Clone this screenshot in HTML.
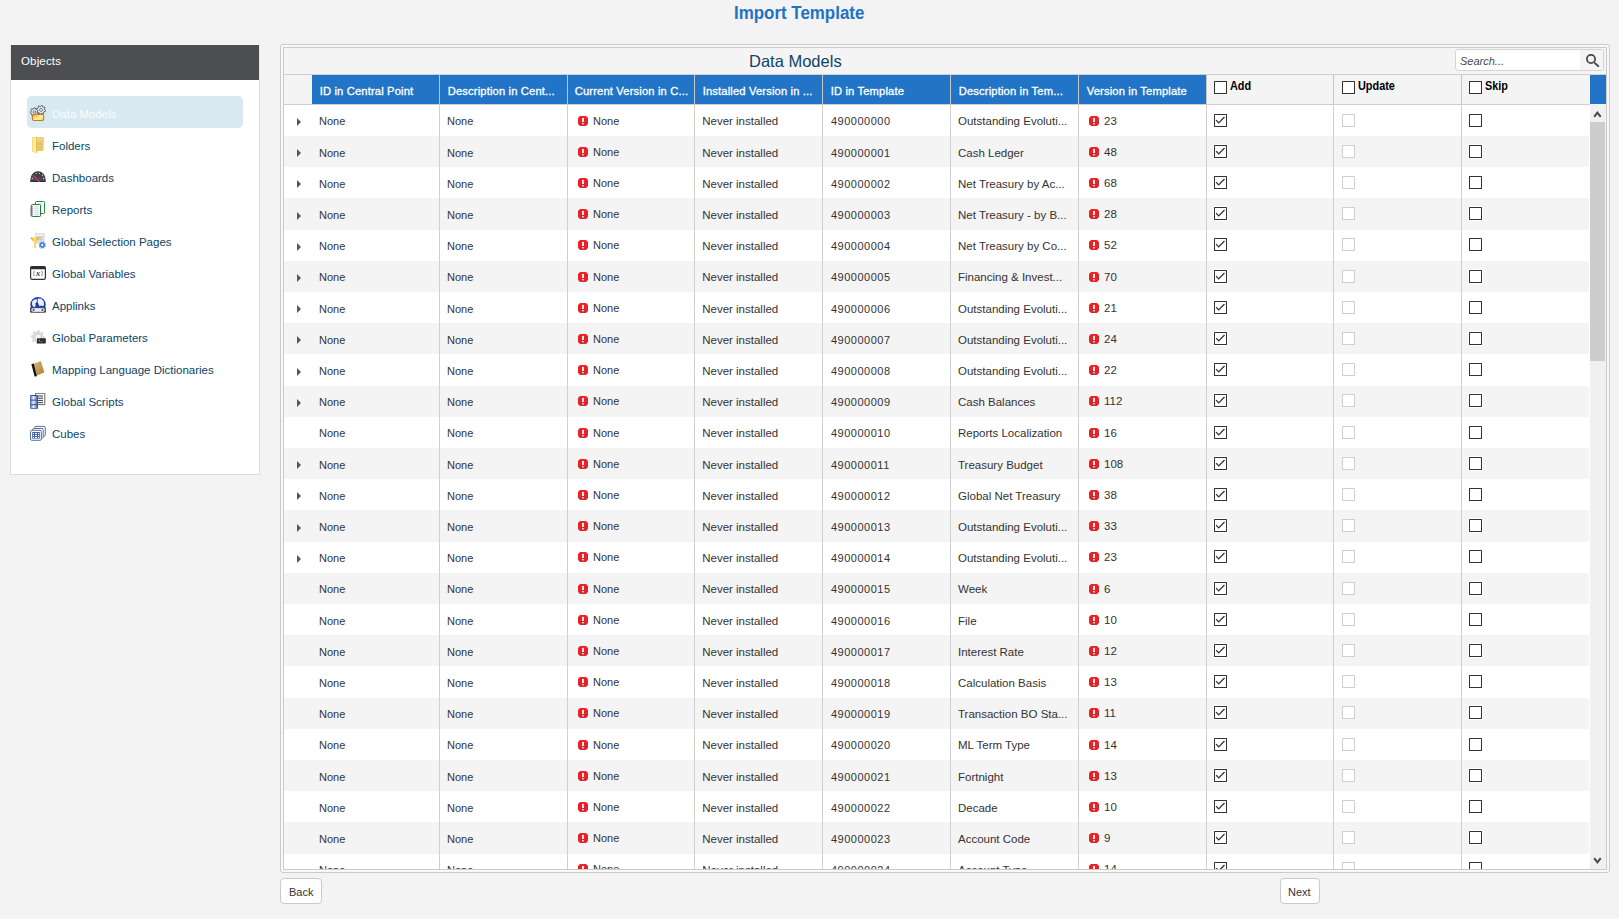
<!DOCTYPE html>
<html><head><meta charset="utf-8"><title>Import Template</title>
<style>
html,body{margin:0;padding:0;}
body{width:1619px;height:919px;overflow:hidden;background:#f3f3f3;position:relative;font-family:"Liberation Sans",sans-serif;color:#333;}
div{box-sizing:border-box;}
.a{position:absolute;}
.t{position:absolute;white-space:nowrap;}
.side-item{color:#0c4465;}
.hd{color:#fff;-webkit-text-stroke:0.3px #fff;letter-spacing:0.15px;}
.cb{position:absolute;width:13px;height:13px;border:1.3px solid #333;background:#fff;border-radius:0.5px;box-shadow:0 0 0 1px #fff;}
.cbd{position:absolute;width:13px;height:13px;border:1.3px solid #cfcfcf;background:#fff;border-radius:0.5px;}
.vl{position:absolute;width:1px;background:#d0d0d0;}
.err{position:absolute;width:10px;height:10px;}
.tri{position:absolute;width:0;height:0;border-top:4.5px solid transparent;border-bottom:4.5px solid transparent;border-left:4.5px solid #555;}
.btn{position:absolute;background:#fff;border:1px solid #c9c9c9;border-radius:4px;}
</style></head><body>
<div class="t" style="left:734px;top:2.46px;font-size:18px;line-height:22px;font-weight:bold;color:#1f72c4;transform:scaleX(0.94);transform-origin:0 0;">Import Template</div>
<div class="a" style="left:10px;top:44px;width:250px;height:431px;background:#fff;border:1px solid #dcdcdc;border-top-color:#f7f7f7;"></div>
<div class="a" style="left:10px;top:44px;width:250px;height:36px;background:#4d4e52;border:1px solid #e8e8e8;border-top-color:#f6f6f6;border-bottom:none;"></div>
<div class="t" style="left:21px;top:54.31px;font-size:11.5px;line-height:14px;color:#fff;letter-spacing:0.15px;">Objects</div>
<div class="a" style="left:27px;top:96px;width:216px;height:32px;background:#d8e9f2;border-radius:5px;"></div>
<div class="t side-item" style="left:52px;top:107.01px;font-size:11.5px;line-height:14px;color:#f9fcfe;">Data Models</div>
<div class="a icon0" style="left:30px;top:105px;width:16px;height:16px;"><svg width="16" height="16" viewBox="0 0 16 16"><defs><linearGradient id="g0" x1="0" y1="0" x2="1" y2="1"><stop offset="0" stop-color="#f0a030"/><stop offset=".6" stop-color="#fff3a0"/><stop offset="1" stop-color="#f0c040"/></linearGradient></defs><polygon points="8.61,7.85 8.32,8.77 6.95,8.93 6.46,9.45 6.36,10.83 5.46,11.17 4.48,10.20 3.76,10.14 2.63,10.92 1.80,10.43 1.95,9.06 1.55,8.46 0.23,8.06 0.10,7.10 1.26,6.36 1.48,5.68 0.97,4.40 1.64,3.70 2.94,4.15 3.61,3.90 4.30,2.70 5.25,2.79 5.72,4.08 6.33,4.45 7.70,4.24 8.23,5.04 7.50,6.21 7.60,6.92" fill="#dfe6ef" stroke="#44556e" stroke-width="0.9" stroke-linejoin="round"/><polygon points="15.58,5.36 15.40,6.24 14.00,6.51 13.62,7.06 13.91,8.46 13.16,8.96 11.98,8.16 11.33,8.28 10.54,9.48 9.66,9.30 9.39,7.90 8.84,7.52 7.44,7.81 6.94,7.06 7.74,5.88 7.62,5.23 6.42,4.44 6.60,3.56 8.00,3.29 8.38,2.74 8.09,1.34 8.84,0.84 10.02,1.64 10.67,1.52 11.46,0.32 12.34,0.50 12.61,1.90 13.16,2.28 14.56,1.99 15.06,2.74 14.26,3.92 14.38,4.57" fill="#e9eef5" stroke="#44556e" stroke-width="0.9" stroke-linejoin="round"/><circle cx="4.4" cy="7" r="1.3" fill="none" stroke="#6b7a90" stroke-width=".9"/><circle cx="11" cy="4.9" r="1.5" fill="none" stroke="#6b7a90" stroke-width=".9"/><rect x="2.3" y="9.3" width="11.4" height="6.3" rx="1.6" fill="url(#g0)" stroke="#c06e12" stroke-width="1"/></svg></div>
<div class="t side-item" style="left:52px;top:139.01px;font-size:11.5px;line-height:14px;">Folders</div>
<div class="a icon1" style="left:30px;top:137px;width:16px;height:16px;"><svg width="16" height="16" viewBox="0 0 16 16"><path d="M2.2 0.2H14V4.7H13V13.7H6.5V15.8L2.2 14.5Z" fill="#e5bf55"/><rect x="6.5" y="0.8" width="7" height="12.5" fill="#e9c665"/><rect x="6.5" y="0.5" width="7.5" height="4" fill="#efd57c"/><path d="M2.2 0.4H6.7V15.9L2.4 14.6Z" fill="#f6e68a"/><rect x="4.2" y="0.6" width="1.6" height="15" fill="#fbf2a0"/><rect x="6.3" y="0.6" width=".6" height="15.2" fill="#d4ac3c"/></svg></div>
<div class="t side-item" style="left:52px;top:171.01px;font-size:11.5px;line-height:14px;">Dashboards</div>
<div class="a icon2" style="left:30px;top:169px;width:16px;height:16px;"><svg width="16" height="16" viewBox="0 0 16 16"><defs><linearGradient id="g2" x1="0" y1="0" x2="0" y2="1"><stop offset="0" stop-color="#36363a"/><stop offset="1" stop-color="#4e4e66"/></linearGradient></defs><path d="M0.3 12.7V10.5A7.7 8.3 0 0 1 15.7 10.5V12.7Z" fill="url(#g2)"/><rect x="0.3" y="11.8" width="15.4" height="1" fill="#1f1f22"/><g fill="#c8c8c8"><circle cx="6.4" cy="4.4" r=".7"/><circle cx="9.4" cy="4.4" r=".7"/><circle cx="12.4" cy="6.3" r=".7"/><circle cx="2.4" cy="9.5" r=".7"/><circle cx="13.5" cy="9.5" r=".7"/></g><line x1="3" y1="6.1" x2="9.6" y2="12.9" stroke="#e83a3a" stroke-width="1.3"/></svg></div>
<div class="t side-item" style="left:52px;top:203.01px;font-size:11.5px;line-height:14px;">Reports</div>
<div class="a icon3" style="left:30px;top:201px;width:16px;height:16px;"><svg width="16" height="16" viewBox="0 0 16 16"><rect x="5.5" y="0.5" width="9" height="12" rx=".8" fill="#fbfdfb" stroke="#2f8c3c" stroke-width="1"/><g fill="#c5cdf0"><rect x="8" y="2.5" width="4.5" height=".7"/><rect x="10.5" y="4.5" width="2" height=".7"/><rect x="10.5" y="6.5" width="2" height=".7"/><rect x="10.5" y="8.5" width="2" height=".7"/><rect x="10.5" y="10.5" width="2" height=".7"/></g><rect x="1.5" y="3.5" width="9" height="12" rx=".8" fill="#f4faf6" stroke="#2a7a34" stroke-width="1"/><g fill="#c5cdf0"><rect x="4.2" y="5.5" width="4.5" height=".8"/><rect x="4.2" y="7.5" width="4.5" height=".8"/><rect x="4.2" y="9.5" width="4.5" height=".8"/><rect x="4.2" y="11.5" width="4.5" height=".8"/><rect x="4.2" y="13.5" width="4.5" height=".8"/></g><g fill="#888"><rect x="0" y="5.2" width="3" height="1.2"/><rect x="0" y="7.2" width="3" height="1.2"/><rect x="0" y="9.2" width="3" height="1.2"/><rect x="0" y="11.2" width="3" height="1.2"/><rect x="0" y="13.2" width="3" height="1.2"/></g></svg></div>
<div class="t side-item" style="left:52px;top:235.01px;font-size:11.5px;line-height:14px;">Global Selection Pages</div>
<div class="a icon4" style="left:30px;top:233px;width:16px;height:16px;"><svg width="16" height="16" viewBox="0 0 16 16"><rect x="5" y="0" width="9.8" height="10.6" fill="#dedede"/><rect x="6" y="1.2" width="7.5" height="1.6" fill="#f2f2f2"/><rect x="6.5" y="4" width="6" height="1" fill="#bdbdbd"/><rect x="6.5" y="6" width="6" height="1" fill="#c4c4c4"/><defs><linearGradient id="g4" x1="0" y1="0" x2="1" y2="0"><stop offset="0" stop-color="#e8900a"/><stop offset=".5" stop-color="#ffe070"/><stop offset="1" stop-color="#e8980f"/></linearGradient></defs><path d="M0 4.4H9.4L6 9.5V15.8L4 14.5V9.5Z" fill="url(#g4)"/><polygon points="15.93,12.84 15.71,13.53 14.54,13.61 14.20,14.02 14.34,15.18 13.70,15.52 12.82,14.75 12.29,14.80 11.56,15.73 10.87,15.51 10.79,14.34 10.38,14.00 9.22,14.14 8.88,13.50 9.65,12.62 9.60,12.09 8.67,11.36 8.89,10.67 10.06,10.59 10.40,10.18 10.26,9.02 10.90,8.68 11.78,9.45 12.31,9.40 13.04,8.47 13.73,8.69 13.81,9.86 14.22,10.20 15.38,10.06 15.72,10.70 14.95,11.58 15.00,12.11" fill="#4d86cc" stroke-linejoin="round"/><circle cx="12.3" cy="12.1" r="1.1" fill="#eef5fc"/></svg></div>
<div class="t side-item" style="left:52px;top:267.01px;font-size:11.5px;line-height:14px;">Global Variables</div>
<div class="a icon5" style="left:30px;top:265px;width:16px;height:16px;"><svg width="16" height="16" viewBox="0 0 16 16"><rect x="0.6" y="1.6" width="14.8" height="12.8" rx="1.6" fill="#fff" stroke="#333" stroke-width="1.2"/><rect x="0.6" y="1.6" width="14.8" height="2.6" rx="1" fill="#2b2b2b"/><path d="M4.3 5.8Q2.9 8.4 4.3 11" fill="none" stroke="#888" stroke-width="1"/><path d="M11.7 5.8Q13.1 8.4 11.7 11" fill="none" stroke="#888" stroke-width="1"/><text x="8" y="10.8" font-family="Liberation Serif" font-style="italic" font-weight="bold" font-size="8.5" text-anchor="middle" fill="#3a3a3a">x</text></svg></div>
<div class="t side-item" style="left:52px;top:299.01px;font-size:11.5px;line-height:14px;">Applinks</div>
<div class="a icon6" style="left:30px;top:297px;width:16px;height:16px;"><svg width="16" height="16" viewBox="0 0 16 16"><circle cx="8" cy="7.8" r="7.7" fill="#1340b8"/><path d="M2.2 4.2L4.8 2.2L7 2.6L6.8 5.2L5.4 6L5.6 9.4L3.4 10L2 7.4Z" fill="#e8eef9"/><path d="M7.8 1.6L11.4 1.8L13.6 4.2L14 7.8L12.8 9.6L11.2 8.2L9.8 9.4L8.6 7.6L7.6 4.8Z" fill="#eef2fa"/><rect x="0" y="10.2" width="16" height="5.6" rx="1.2" fill="#4a4a4a"/><rect x="1.3" y="11.3" width="13.4" height="3.4" rx="1.7" fill="#fff"/><rect x="5.5" y="12.4" width="5" height="1.2" fill="#ddd"/><circle cx="3.6" cy="13" r="1.1" fill="#1a3fc0"/><circle cx="12.4" cy="13" r="1.1" fill="#1a3fc0"/></svg></div>
<div class="t side-item" style="left:52px;top:331.01px;font-size:11.5px;line-height:14px;">Global Parameters</div>
<div class="a icon7" style="left:30px;top:329px;width:16px;height:16px;"><svg width="16" height="16" viewBox="0 0 16 16"><polygon points="15.00,8.00 14.86,9.40 12.79,10.07 12.29,11.00 12.89,13.09 11.80,13.99 9.87,12.99 8.85,13.30 7.80,15.20 6.40,15.06 5.73,12.99 4.80,12.49 2.71,13.09 1.81,12.00 2.81,10.07 2.50,9.05 0.60,8.00 0.74,6.60 2.81,5.93 3.31,5.00 2.71,2.91 3.80,2.01 5.73,3.01 6.75,2.70 7.80,0.80 9.20,0.94 9.87,3.01 10.80,3.51 12.89,2.91 13.79,4.00 12.79,5.93 13.10,6.95" fill="#dadada" stroke-linejoin="round"/><circle cx="8" cy="8" r="2.2" fill="#f7f7f7"/><rect x="7" y="9.3" width="8.8" height="5.2" rx=".6" fill="#2c2c2c"/><path d="M8.8 10.5L10 11.5L8.8 12.5" stroke="#ddd" stroke-width=".6" fill="none"/><rect x="10.5" y="12.3" width="2" height=".6" fill="#aaa"/></svg></div>
<div class="t side-item" style="left:52px;top:363.01px;font-size:11.5px;line-height:14px;">Mapping Language Dictionaries</div>
<div class="a icon8" style="left:30px;top:361px;width:16px;height:16px;"><svg width="16" height="16" viewBox="0 0 16 16"><defs><linearGradient id="g8" x1="0" y1="0" x2="1" y2="1"><stop offset="0" stop-color="#dcb777"/><stop offset="1" stop-color="#a88038"/></linearGradient></defs><path d="M3.5 2.8L10.9 0L14.4 11.3L6.2 15Z" fill="url(#g8)"/><path d="M1.4 3.3L3.8 2.6L6.8 15.2L4.6 15.6Z" fill="#111"/></svg></div>
<div class="t side-item" style="left:52px;top:395.01px;font-size:11.5px;line-height:14px;">Global Scripts</div>
<div class="a icon9" style="left:30px;top:393px;width:16px;height:16px;"><svg width="16" height="16" viewBox="0 0 16 16"><path d="M5.5 0.3H14.8V10.5Q15.8 11.5 14.8 11.6H5.5Z" fill="#fff" stroke="#555" stroke-width=".9"/><g fill="#3a3a3a"><rect x="7.5" y="2.5" width="5.5" height="1"/><rect x="7.5" y="4.7" width="5.5" height="1"/><rect x="7.5" y="6.9" width="5.5" height="1"/><rect x="7.5" y="9.1" width="5.5" height="1"/></g><rect x="0.2" y="2" width="7.8" height="13.8" rx=".6" fill="#2f4f9e"/><defs><linearGradient id="g9" x1="0" y1="0" x2="1" y2="0"><stop offset="0" stop-color="#6e8fd2"/><stop offset=".4" stop-color="#e8efff"/><stop offset="1" stop-color="#4a6cb8"/></linearGradient></defs><rect x="1" y="3" width="6.2" height="3.6" fill="url(#g9)"/><rect x="1" y="7.6" width="6.2" height="3.6" fill="url(#g9)"/><rect x="1" y="12.2" width="6.2" height="2.8" fill="url(#g9)"/></svg></div>
<div class="t side-item" style="left:52px;top:427.01px;font-size:11.5px;line-height:14px;">Cubes</div>
<div class="a icon10" style="left:30px;top:425px;width:16px;height:16px;"><svg width="16" height="16" viewBox="0 0 16 16"><rect x="4.7" y="1.4" width="10.6" height="9.7" rx="1.3" fill="#fff" stroke="#5670a0" stroke-width="1"/><rect x="2.6" y="3.5" width="10.6" height="9.7" rx="1.3" fill="#fff" stroke="#5670a0" stroke-width="1"/><rect x="0.5" y="5.3" width="10.8" height="10" rx="1.3" fill="#fff" stroke="#5670a0" stroke-width="1"/><rect x="2.2" y="7" width="7.6" height="6.6" fill="#3f62ab"/><g fill="#fff"><rect x="3" y="8" width="1" height="1"/><rect x="5" y="8" width="2" height="1"/><rect x="8" y="8" width="1" height="1"/><rect x="3" y="10" width="1" height="1"/><rect x="5" y="10" width="2" height="1"/><rect x="8" y="10" width="1" height="1"/><rect x="3" y="12" width="1" height="1"/><rect x="5" y="12" width="2" height="1"/><rect x="8" y="12" width="1" height="1"/></g></svg></div>
<div class="a" style="left:280px;top:44px;width:1330px;height:829px;border:1px solid #cbcbcb;border-radius:3px;background:#f8f8f8;"></div>
<div class="a" style="left:283px;top:47px;width:1324px;height:823px;border:1px solid #cbcbcb;background:#f4f4f4;"></div>
<div class="t" style="left:749px;top:51.28px;font-size:16.5px;line-height:20px;color:#0e4468;">Data Models</div>
<div class="a" style="left:1455px;top:49px;width:149px;height:22px;border:1px solid #d3d3d3;border-radius:3px;background:#fff;overflow:hidden;"><div class="a" style="left:124px;top:0;width:23px;height:20px;background:#f4f4f4;"></div></div>
<div class="t" style="left:1460px;top:54.69px;font-size:11px;line-height:13px;font-style:italic;color:#484848;">Search...</div>
<svg class="a" style="left:1584px;top:52px;" width="18" height="16" viewBox="0 0 18 16"><circle cx="7" cy="7" r="4.1" fill="none" stroke="#444" stroke-width="1.7"/><line x1="11" y1="11.2" x2="14.3" y2="14.1" stroke="#444" stroke-width="1.9" stroke-linecap="round"/></svg>
<div class="a" style="left:284px;top:74px;width:1322px;height:1px;background:#cfcfcf;"></div>
<div class="a" style="left:284px;top:75px;width:28px;height:29px;background:#f4f4f4;"></div>
<div class="a" style="left:312px;top:75px;width:894px;height:29px;background:#2275c6;"></div>
<div class="a" style="left:1206px;top:75px;width:384px;height:29px;background:#f4f4f4;"></div>
<div class="a" style="left:1590px;top:75px;width:16px;height:29px;background:#2275c6;"></div>
<div class="a" style="left:284px;top:104px;width:1306px;height:1px;background:#cfcfcf;"></div>
<div class="vl" style="left:439px;top:75px;height:29px;background:#c6c6c6;"></div>
<div class="vl" style="left:567px;top:75px;height:29px;background:#c6c6c6;"></div>
<div class="vl" style="left:694px;top:75px;height:29px;background:#c6c6c6;"></div>
<div class="vl" style="left:822px;top:75px;height:29px;background:#c6c6c6;"></div>
<div class="vl" style="left:950px;top:75px;height:29px;background:#c6c6c6;"></div>
<div class="vl" style="left:1078px;top:75px;height:29px;background:#c6c6c6;"></div>
<div class="vl" style="left:1206px;top:75px;height:29px;background:#c6c6c6;"></div>
<div class="vl" style="left:1333px;top:75px;height:29px;background:#c6c6c6;"></div>
<div class="vl" style="left:1461px;top:75px;height:29px;background:#c6c6c6;"></div>
<div class="t hd" style="left:319.7px;top:84.62px;font-size:11.2px;line-height:13px;">ID in Central Point</div>
<div class="t hd" style="left:447.7px;top:84.62px;font-size:11.2px;line-height:13px;">Description in Cent...</div>
<div class="t hd" style="left:574.7px;top:84.62px;font-size:11.2px;line-height:13px;">Current Version in C...</div>
<div class="t hd" style="left:702.7px;top:84.62px;font-size:11.2px;line-height:13px;">Installed Version in ...</div>
<div class="t hd" style="left:830.7px;top:84.62px;font-size:11.2px;line-height:13px;">ID in Template</div>
<div class="t hd" style="left:958.7px;top:84.62px;font-size:11.2px;line-height:13px;">Description in Tem...</div>
<div class="t hd" style="left:1086.7px;top:84.62px;font-size:11.2px;line-height:13px;">Version in Template</div>
<div class="cb" style="left:1214px;top:81px;box-shadow:none;"></div>
<div class="t" style="left:1230px;top:78.77px;font-size:12.5px;line-height:15px;font-weight:bold;color:#000;transform:scaleX(0.87);transform-origin:0 0;">Add</div>
<div class="cb" style="left:1342px;top:81px;box-shadow:none;"></div>
<div class="t" style="left:1358px;top:78.77px;font-size:12.5px;line-height:15px;font-weight:bold;color:#000;transform:scaleX(0.87);transform-origin:0 0;">Update</div>
<div class="cb" style="left:1469px;top:81px;box-shadow:none;"></div>
<div class="t" style="left:1485px;top:78.77px;font-size:12.5px;line-height:15px;font-weight:bold;color:#000;transform:scaleX(0.87);transform-origin:0 0;">Skip</div>
<div class="a" style="left:284px;top:105px;width:1306px;height:764px;overflow:hidden;background:#fff;">
<div class="tri" style="left:13px;top:13px;"></div>
<div class="t" style="left:35px;top:9.99px;font-size:11px;line-height:13px;">None</div>
<div class="t" style="left:163px;top:9.99px;font-size:11px;line-height:13px;">None</div>
<svg class="err" style="left:294px;top:11px;" viewBox="0 0 10 10"><path d="M2 0H8L10 2V8L8 10H2L0 8V2Z" fill="url(#eg)"/><rect x="4.1" y="1.9" width="1.8" height="4.1" fill="#fff"/><rect x="4.1" y="7.2" width="1.8" height="1.1" fill="#fff"/></svg><div class="t" style="left:309px;top:9.99px;font-size:11px;line-height:13px;">None</div>
<div class="t" style="left:418.20000000000005px;top:9.31px;font-size:11.5px;line-height:14px;">Never installed</div>
<div class="t" style="left:547px;top:9.99px;font-size:11px;line-height:13px;letter-spacing:0.5px;">490000000</div>
<div class="t" style="left:674px;top:9.31px;font-size:11.5px;line-height:14px;">Outstanding Evoluti...</div>
<svg class="err" style="left:805px;top:11px;" viewBox="0 0 10 10"><path d="M2 0H8L10 2V8L8 10H2L0 8V2Z" fill="url(#eg)"/><rect x="4.1" y="1.9" width="1.8" height="4.1" fill="#fff"/><rect x="4.1" y="7.2" width="1.8" height="1.1" fill="#fff"/></svg><div class="t" style="left:820px;top:9.31px;font-size:11.5px;line-height:14px;">23</div>
<div class="cb" style="left:930px;top:9px;"><svg width="11" height="11" viewBox="0 0 11 11" style="position:absolute;left:0;top:0"><path d="M1.1 5.1L3.7 7.9L9.5 2.1" fill="none" stroke="#333" stroke-width="1.35"/></svg></div>
<div class="cbd" style="left:1058px;top:9px;"></div>
<div class="cb" style="left:1185px;top:9px;"></div>
<div class="a" style="left:0;top:31px;width:1305px;height:31px;background:#f4f4f4;"></div>
<div class="tri" style="left:13px;top:44px;"></div>
<div class="t" style="left:35px;top:41.99px;font-size:11px;line-height:13px;">None</div>
<div class="t" style="left:163px;top:41.99px;font-size:11px;line-height:13px;">None</div>
<svg class="err" style="left:294px;top:42px;" viewBox="0 0 10 10"><path d="M2 0H8L10 2V8L8 10H2L0 8V2Z" fill="url(#eg)"/><rect x="4.1" y="1.9" width="1.8" height="4.1" fill="#fff"/><rect x="4.1" y="7.2" width="1.8" height="1.1" fill="#fff"/></svg><div class="t" style="left:309px;top:40.99px;font-size:11px;line-height:13px;">None</div>
<div class="t" style="left:418.20000000000005px;top:41.31px;font-size:11.5px;line-height:14px;">Never installed</div>
<div class="t" style="left:547px;top:41.99px;font-size:11px;line-height:13px;letter-spacing:0.5px;">490000001</div>
<div class="t" style="left:674px;top:41.31px;font-size:11.5px;line-height:14px;">Cash Ledger</div>
<svg class="err" style="left:805px;top:42px;" viewBox="0 0 10 10"><path d="M2 0H8L10 2V8L8 10H2L0 8V2Z" fill="url(#eg)"/><rect x="4.1" y="1.9" width="1.8" height="4.1" fill="#fff"/><rect x="4.1" y="7.2" width="1.8" height="1.1" fill="#fff"/></svg><div class="t" style="left:820px;top:40.31px;font-size:11.5px;line-height:14px;">48</div>
<div class="cb" style="left:930px;top:40px;"><svg width="11" height="11" viewBox="0 0 11 11" style="position:absolute;left:0;top:0"><path d="M1.1 5.1L3.7 7.9L9.5 2.1" fill="none" stroke="#333" stroke-width="1.35"/></svg></div>
<div class="cbd" style="left:1058px;top:40px;"></div>
<div class="cb" style="left:1185px;top:40px;"></div>
<div class="tri" style="left:13px;top:75px;"></div>
<div class="t" style="left:35px;top:72.99px;font-size:11px;line-height:13px;">None</div>
<div class="t" style="left:163px;top:72.99px;font-size:11px;line-height:13px;">None</div>
<svg class="err" style="left:294px;top:73px;" viewBox="0 0 10 10"><path d="M2 0H8L10 2V8L8 10H2L0 8V2Z" fill="url(#eg)"/><rect x="4.1" y="1.9" width="1.8" height="4.1" fill="#fff"/><rect x="4.1" y="7.2" width="1.8" height="1.1" fill="#fff"/></svg><div class="t" style="left:309px;top:71.99px;font-size:11px;line-height:13px;">None</div>
<div class="t" style="left:418.20000000000005px;top:72.31px;font-size:11.5px;line-height:14px;">Never installed</div>
<div class="t" style="left:547px;top:72.99px;font-size:11px;line-height:13px;letter-spacing:0.5px;">490000002</div>
<div class="t" style="left:674px;top:72.31px;font-size:11.5px;line-height:14px;">Net Treasury by Ac...</div>
<svg class="err" style="left:805px;top:73px;" viewBox="0 0 10 10"><path d="M2 0H8L10 2V8L8 10H2L0 8V2Z" fill="url(#eg)"/><rect x="4.1" y="1.9" width="1.8" height="4.1" fill="#fff"/><rect x="4.1" y="7.2" width="1.8" height="1.1" fill="#fff"/></svg><div class="t" style="left:820px;top:71.31px;font-size:11.5px;line-height:14px;">68</div>
<div class="cb" style="left:930px;top:71px;"><svg width="11" height="11" viewBox="0 0 11 11" style="position:absolute;left:0;top:0"><path d="M1.1 5.1L3.7 7.9L9.5 2.1" fill="none" stroke="#333" stroke-width="1.35"/></svg></div>
<div class="cbd" style="left:1058px;top:71px;"></div>
<div class="cb" style="left:1185px;top:71px;"></div>
<div class="a" style="left:0;top:93px;width:1305px;height:32px;background:#f4f4f4;"></div>
<div class="tri" style="left:13px;top:107px;"></div>
<div class="t" style="left:35px;top:103.99px;font-size:11px;line-height:13px;">None</div>
<div class="t" style="left:163px;top:103.99px;font-size:11px;line-height:13px;">None</div>
<svg class="err" style="left:294px;top:104px;" viewBox="0 0 10 10"><path d="M2 0H8L10 2V8L8 10H2L0 8V2Z" fill="url(#eg)"/><rect x="4.1" y="1.9" width="1.8" height="4.1" fill="#fff"/><rect x="4.1" y="7.2" width="1.8" height="1.1" fill="#fff"/></svg><div class="t" style="left:309px;top:102.99px;font-size:11px;line-height:13px;">None</div>
<div class="t" style="left:418.20000000000005px;top:103.31px;font-size:11.5px;line-height:14px;">Never installed</div>
<div class="t" style="left:547px;top:103.99px;font-size:11px;line-height:13px;letter-spacing:0.5px;">490000003</div>
<div class="t" style="left:674px;top:103.31px;font-size:11.5px;line-height:14px;">Net Treasury - by B...</div>
<svg class="err" style="left:805px;top:104px;" viewBox="0 0 10 10"><path d="M2 0H8L10 2V8L8 10H2L0 8V2Z" fill="url(#eg)"/><rect x="4.1" y="1.9" width="1.8" height="4.1" fill="#fff"/><rect x="4.1" y="7.2" width="1.8" height="1.1" fill="#fff"/></svg><div class="t" style="left:820px;top:102.31px;font-size:11.5px;line-height:14px;">28</div>
<div class="cb" style="left:930px;top:102px;"><svg width="11" height="11" viewBox="0 0 11 11" style="position:absolute;left:0;top:0"><path d="M1.1 5.1L3.7 7.9L9.5 2.1" fill="none" stroke="#333" stroke-width="1.35"/></svg></div>
<div class="cbd" style="left:1058px;top:102px;"></div>
<div class="cb" style="left:1185px;top:102px;"></div>
<div class="tri" style="left:13px;top:138px;"></div>
<div class="t" style="left:35px;top:134.99px;font-size:11px;line-height:13px;">None</div>
<div class="t" style="left:163px;top:134.99px;font-size:11px;line-height:13px;">None</div>
<svg class="err" style="left:294px;top:135px;" viewBox="0 0 10 10"><path d="M2 0H8L10 2V8L8 10H2L0 8V2Z" fill="url(#eg)"/><rect x="4.1" y="1.9" width="1.8" height="4.1" fill="#fff"/><rect x="4.1" y="7.2" width="1.8" height="1.1" fill="#fff"/></svg><div class="t" style="left:309px;top:133.99px;font-size:11px;line-height:13px;">None</div>
<div class="t" style="left:418.20000000000005px;top:134.31px;font-size:11.5px;line-height:14px;">Never installed</div>
<div class="t" style="left:547px;top:134.99px;font-size:11px;line-height:13px;letter-spacing:0.5px;">490000004</div>
<div class="t" style="left:674px;top:134.31px;font-size:11.5px;line-height:14px;">Net Treasury by Co...</div>
<svg class="err" style="left:805px;top:135px;" viewBox="0 0 10 10"><path d="M2 0H8L10 2V8L8 10H2L0 8V2Z" fill="url(#eg)"/><rect x="4.1" y="1.9" width="1.8" height="4.1" fill="#fff"/><rect x="4.1" y="7.2" width="1.8" height="1.1" fill="#fff"/></svg><div class="t" style="left:820px;top:133.31px;font-size:11.5px;line-height:14px;">52</div>
<div class="cb" style="left:930px;top:133px;"><svg width="11" height="11" viewBox="0 0 11 11" style="position:absolute;left:0;top:0"><path d="M1.1 5.1L3.7 7.9L9.5 2.1" fill="none" stroke="#333" stroke-width="1.35"/></svg></div>
<div class="cbd" style="left:1058px;top:133px;"></div>
<div class="cb" style="left:1185px;top:133px;"></div>
<div class="a" style="left:0;top:156px;width:1305px;height:31px;background:#f4f4f4;"></div>
<div class="tri" style="left:13px;top:169px;"></div>
<div class="t" style="left:35px;top:165.99px;font-size:11px;line-height:13px;">None</div>
<div class="t" style="left:163px;top:165.99px;font-size:11px;line-height:13px;">None</div>
<svg class="err" style="left:294px;top:167px;" viewBox="0 0 10 10"><path d="M2 0H8L10 2V8L8 10H2L0 8V2Z" fill="url(#eg)"/><rect x="4.1" y="1.9" width="1.8" height="4.1" fill="#fff"/><rect x="4.1" y="7.2" width="1.8" height="1.1" fill="#fff"/></svg><div class="t" style="left:309px;top:165.99px;font-size:11px;line-height:13px;">None</div>
<div class="t" style="left:418.20000000000005px;top:165.31px;font-size:11.5px;line-height:14px;">Never installed</div>
<div class="t" style="left:547px;top:165.99px;font-size:11px;line-height:13px;letter-spacing:0.5px;">490000005</div>
<div class="t" style="left:674px;top:165.31px;font-size:11.5px;line-height:14px;">Financing &amp; Invest...</div>
<svg class="err" style="left:805px;top:167px;" viewBox="0 0 10 10"><path d="M2 0H8L10 2V8L8 10H2L0 8V2Z" fill="url(#eg)"/><rect x="4.1" y="1.9" width="1.8" height="4.1" fill="#fff"/><rect x="4.1" y="7.2" width="1.8" height="1.1" fill="#fff"/></svg><div class="t" style="left:820px;top:165.31px;font-size:11.5px;line-height:14px;">70</div>
<div class="cb" style="left:930px;top:165px;"><svg width="11" height="11" viewBox="0 0 11 11" style="position:absolute;left:0;top:0"><path d="M1.1 5.1L3.7 7.9L9.5 2.1" fill="none" stroke="#333" stroke-width="1.35"/></svg></div>
<div class="cbd" style="left:1058px;top:165px;"></div>
<div class="cb" style="left:1185px;top:165px;"></div>
<div class="tri" style="left:13px;top:200px;"></div>
<div class="t" style="left:35px;top:197.99px;font-size:11px;line-height:13px;">None</div>
<div class="t" style="left:163px;top:197.99px;font-size:11px;line-height:13px;">None</div>
<svg class="err" style="left:294px;top:198px;" viewBox="0 0 10 10"><path d="M2 0H8L10 2V8L8 10H2L0 8V2Z" fill="url(#eg)"/><rect x="4.1" y="1.9" width="1.8" height="4.1" fill="#fff"/><rect x="4.1" y="7.2" width="1.8" height="1.1" fill="#fff"/></svg><div class="t" style="left:309px;top:196.99px;font-size:11px;line-height:13px;">None</div>
<div class="t" style="left:418.20000000000005px;top:197.31px;font-size:11.5px;line-height:14px;">Never installed</div>
<div class="t" style="left:547px;top:197.99px;font-size:11px;line-height:13px;letter-spacing:0.5px;">490000006</div>
<div class="t" style="left:674px;top:197.31px;font-size:11.5px;line-height:14px;">Outstanding Evoluti...</div>
<svg class="err" style="left:805px;top:198px;" viewBox="0 0 10 10"><path d="M2 0H8L10 2V8L8 10H2L0 8V2Z" fill="url(#eg)"/><rect x="4.1" y="1.9" width="1.8" height="4.1" fill="#fff"/><rect x="4.1" y="7.2" width="1.8" height="1.1" fill="#fff"/></svg><div class="t" style="left:820px;top:196.31px;font-size:11.5px;line-height:14px;">21</div>
<div class="cb" style="left:930px;top:196px;"><svg width="11" height="11" viewBox="0 0 11 11" style="position:absolute;left:0;top:0"><path d="M1.1 5.1L3.7 7.9L9.5 2.1" fill="none" stroke="#333" stroke-width="1.35"/></svg></div>
<div class="cbd" style="left:1058px;top:196px;"></div>
<div class="cb" style="left:1185px;top:196px;"></div>
<div class="a" style="left:0;top:218px;width:1305px;height:31px;background:#f4f4f4;"></div>
<div class="tri" style="left:13px;top:231px;"></div>
<div class="t" style="left:35px;top:228.99px;font-size:11px;line-height:13px;">None</div>
<div class="t" style="left:163px;top:228.99px;font-size:11px;line-height:13px;">None</div>
<svg class="err" style="left:294px;top:229px;" viewBox="0 0 10 10"><path d="M2 0H8L10 2V8L8 10H2L0 8V2Z" fill="url(#eg)"/><rect x="4.1" y="1.9" width="1.8" height="4.1" fill="#fff"/><rect x="4.1" y="7.2" width="1.8" height="1.1" fill="#fff"/></svg><div class="t" style="left:309px;top:227.99px;font-size:11px;line-height:13px;">None</div>
<div class="t" style="left:418.20000000000005px;top:228.31px;font-size:11.5px;line-height:14px;">Never installed</div>
<div class="t" style="left:547px;top:228.99px;font-size:11px;line-height:13px;letter-spacing:0.5px;">490000007</div>
<div class="t" style="left:674px;top:228.31px;font-size:11.5px;line-height:14px;">Outstanding Evoluti...</div>
<svg class="err" style="left:805px;top:229px;" viewBox="0 0 10 10"><path d="M2 0H8L10 2V8L8 10H2L0 8V2Z" fill="url(#eg)"/><rect x="4.1" y="1.9" width="1.8" height="4.1" fill="#fff"/><rect x="4.1" y="7.2" width="1.8" height="1.1" fill="#fff"/></svg><div class="t" style="left:820px;top:227.31px;font-size:11.5px;line-height:14px;">24</div>
<div class="cb" style="left:930px;top:227px;"><svg width="11" height="11" viewBox="0 0 11 11" style="position:absolute;left:0;top:0"><path d="M1.1 5.1L3.7 7.9L9.5 2.1" fill="none" stroke="#333" stroke-width="1.35"/></svg></div>
<div class="cbd" style="left:1058px;top:227px;"></div>
<div class="cb" style="left:1185px;top:227px;"></div>
<div class="tri" style="left:13px;top:263px;"></div>
<div class="t" style="left:35px;top:259.99px;font-size:11px;line-height:13px;">None</div>
<div class="t" style="left:163px;top:259.99px;font-size:11px;line-height:13px;">None</div>
<svg class="err" style="left:294px;top:260px;" viewBox="0 0 10 10"><path d="M2 0H8L10 2V8L8 10H2L0 8V2Z" fill="url(#eg)"/><rect x="4.1" y="1.9" width="1.8" height="4.1" fill="#fff"/><rect x="4.1" y="7.2" width="1.8" height="1.1" fill="#fff"/></svg><div class="t" style="left:309px;top:258.99px;font-size:11px;line-height:13px;">None</div>
<div class="t" style="left:418.20000000000005px;top:259.31px;font-size:11.5px;line-height:14px;">Never installed</div>
<div class="t" style="left:547px;top:259.99px;font-size:11px;line-height:13px;letter-spacing:0.5px;">490000008</div>
<div class="t" style="left:674px;top:259.31px;font-size:11.5px;line-height:14px;">Outstanding Evoluti...</div>
<svg class="err" style="left:805px;top:260px;" viewBox="0 0 10 10"><path d="M2 0H8L10 2V8L8 10H2L0 8V2Z" fill="url(#eg)"/><rect x="4.1" y="1.9" width="1.8" height="4.1" fill="#fff"/><rect x="4.1" y="7.2" width="1.8" height="1.1" fill="#fff"/></svg><div class="t" style="left:820px;top:258.31px;font-size:11.5px;line-height:14px;">22</div>
<div class="cb" style="left:930px;top:258px;"><svg width="11" height="11" viewBox="0 0 11 11" style="position:absolute;left:0;top:0"><path d="M1.1 5.1L3.7 7.9L9.5 2.1" fill="none" stroke="#333" stroke-width="1.35"/></svg></div>
<div class="cbd" style="left:1058px;top:258px;"></div>
<div class="cb" style="left:1185px;top:258px;"></div>
<div class="a" style="left:0;top:281px;width:1305px;height:31px;background:#f4f4f4;"></div>
<div class="tri" style="left:13px;top:294px;"></div>
<div class="t" style="left:35px;top:290.99px;font-size:11px;line-height:13px;">None</div>
<div class="t" style="left:163px;top:290.99px;font-size:11px;line-height:13px;">None</div>
<svg class="err" style="left:294px;top:291px;" viewBox="0 0 10 10"><path d="M2 0H8L10 2V8L8 10H2L0 8V2Z" fill="url(#eg)"/><rect x="4.1" y="1.9" width="1.8" height="4.1" fill="#fff"/><rect x="4.1" y="7.2" width="1.8" height="1.1" fill="#fff"/></svg><div class="t" style="left:309px;top:289.99px;font-size:11px;line-height:13px;">None</div>
<div class="t" style="left:418.20000000000005px;top:290.31px;font-size:11.5px;line-height:14px;">Never installed</div>
<div class="t" style="left:547px;top:290.99px;font-size:11px;line-height:13px;letter-spacing:0.5px;">490000009</div>
<div class="t" style="left:674px;top:290.31px;font-size:11.5px;line-height:14px;">Cash Balances</div>
<svg class="err" style="left:805px;top:291px;" viewBox="0 0 10 10"><path d="M2 0H8L10 2V8L8 10H2L0 8V2Z" fill="url(#eg)"/><rect x="4.1" y="1.9" width="1.8" height="4.1" fill="#fff"/><rect x="4.1" y="7.2" width="1.8" height="1.1" fill="#fff"/></svg><div class="t" style="left:820px;top:289.31px;font-size:11.5px;line-height:14px;">112</div>
<div class="cb" style="left:930px;top:289px;"><svg width="11" height="11" viewBox="0 0 11 11" style="position:absolute;left:0;top:0"><path d="M1.1 5.1L3.7 7.9L9.5 2.1" fill="none" stroke="#333" stroke-width="1.35"/></svg></div>
<div class="cbd" style="left:1058px;top:289px;"></div>
<div class="cb" style="left:1185px;top:289px;"></div>
<div class="t" style="left:35px;top:321.99px;font-size:11px;line-height:13px;">None</div>
<div class="t" style="left:163px;top:321.99px;font-size:11px;line-height:13px;">None</div>
<svg class="err" style="left:294px;top:323px;" viewBox="0 0 10 10"><path d="M2 0H8L10 2V8L8 10H2L0 8V2Z" fill="url(#eg)"/><rect x="4.1" y="1.9" width="1.8" height="4.1" fill="#fff"/><rect x="4.1" y="7.2" width="1.8" height="1.1" fill="#fff"/></svg><div class="t" style="left:309px;top:321.99px;font-size:11px;line-height:13px;">None</div>
<div class="t" style="left:418.20000000000005px;top:321.31px;font-size:11.5px;line-height:14px;">Never installed</div>
<div class="t" style="left:547px;top:321.99px;font-size:11px;line-height:13px;letter-spacing:0.5px;">490000010</div>
<div class="t" style="left:674px;top:321.31px;font-size:11.5px;line-height:14px;">Reports Localization</div>
<svg class="err" style="left:805px;top:323px;" viewBox="0 0 10 10"><path d="M2 0H8L10 2V8L8 10H2L0 8V2Z" fill="url(#eg)"/><rect x="4.1" y="1.9" width="1.8" height="4.1" fill="#fff"/><rect x="4.1" y="7.2" width="1.8" height="1.1" fill="#fff"/></svg><div class="t" style="left:820px;top:321.31px;font-size:11.5px;line-height:14px;">16</div>
<div class="cb" style="left:930px;top:321px;"><svg width="11" height="11" viewBox="0 0 11 11" style="position:absolute;left:0;top:0"><path d="M1.1 5.1L3.7 7.9L9.5 2.1" fill="none" stroke="#333" stroke-width="1.35"/></svg></div>
<div class="cbd" style="left:1058px;top:321px;"></div>
<div class="cb" style="left:1185px;top:321px;"></div>
<div class="a" style="left:0;top:343px;width:1305px;height:31px;background:#f4f4f4;"></div>
<div class="tri" style="left:13px;top:356px;"></div>
<div class="t" style="left:35px;top:353.99px;font-size:11px;line-height:13px;">None</div>
<div class="t" style="left:163px;top:353.99px;font-size:11px;line-height:13px;">None</div>
<svg class="err" style="left:294px;top:354px;" viewBox="0 0 10 10"><path d="M2 0H8L10 2V8L8 10H2L0 8V2Z" fill="url(#eg)"/><rect x="4.1" y="1.9" width="1.8" height="4.1" fill="#fff"/><rect x="4.1" y="7.2" width="1.8" height="1.1" fill="#fff"/></svg><div class="t" style="left:309px;top:352.99px;font-size:11px;line-height:13px;">None</div>
<div class="t" style="left:418.20000000000005px;top:353.31px;font-size:11.5px;line-height:14px;">Never installed</div>
<div class="t" style="left:547px;top:353.99px;font-size:11px;line-height:13px;letter-spacing:0.5px;">490000011</div>
<div class="t" style="left:674px;top:353.31px;font-size:11.5px;line-height:14px;">Treasury Budget</div>
<svg class="err" style="left:805px;top:354px;" viewBox="0 0 10 10"><path d="M2 0H8L10 2V8L8 10H2L0 8V2Z" fill="url(#eg)"/><rect x="4.1" y="1.9" width="1.8" height="4.1" fill="#fff"/><rect x="4.1" y="7.2" width="1.8" height="1.1" fill="#fff"/></svg><div class="t" style="left:820px;top:352.31px;font-size:11.5px;line-height:14px;">108</div>
<div class="cb" style="left:930px;top:352px;"><svg width="11" height="11" viewBox="0 0 11 11" style="position:absolute;left:0;top:0"><path d="M1.1 5.1L3.7 7.9L9.5 2.1" fill="none" stroke="#333" stroke-width="1.35"/></svg></div>
<div class="cbd" style="left:1058px;top:352px;"></div>
<div class="cb" style="left:1185px;top:352px;"></div>
<div class="tri" style="left:13px;top:387px;"></div>
<div class="t" style="left:35px;top:384.99px;font-size:11px;line-height:13px;">None</div>
<div class="t" style="left:163px;top:384.99px;font-size:11px;line-height:13px;">None</div>
<svg class="err" style="left:294px;top:385px;" viewBox="0 0 10 10"><path d="M2 0H8L10 2V8L8 10H2L0 8V2Z" fill="url(#eg)"/><rect x="4.1" y="1.9" width="1.8" height="4.1" fill="#fff"/><rect x="4.1" y="7.2" width="1.8" height="1.1" fill="#fff"/></svg><div class="t" style="left:309px;top:383.99px;font-size:11px;line-height:13px;">None</div>
<div class="t" style="left:418.20000000000005px;top:384.31px;font-size:11.5px;line-height:14px;">Never installed</div>
<div class="t" style="left:547px;top:384.99px;font-size:11px;line-height:13px;letter-spacing:0.5px;">490000012</div>
<div class="t" style="left:674px;top:384.31px;font-size:11.5px;line-height:14px;">Global Net Treasury</div>
<svg class="err" style="left:805px;top:385px;" viewBox="0 0 10 10"><path d="M2 0H8L10 2V8L8 10H2L0 8V2Z" fill="url(#eg)"/><rect x="4.1" y="1.9" width="1.8" height="4.1" fill="#fff"/><rect x="4.1" y="7.2" width="1.8" height="1.1" fill="#fff"/></svg><div class="t" style="left:820px;top:383.31px;font-size:11.5px;line-height:14px;">38</div>
<div class="cb" style="left:930px;top:383px;"><svg width="11" height="11" viewBox="0 0 11 11" style="position:absolute;left:0;top:0"><path d="M1.1 5.1L3.7 7.9L9.5 2.1" fill="none" stroke="#333" stroke-width="1.35"/></svg></div>
<div class="cbd" style="left:1058px;top:383px;"></div>
<div class="cb" style="left:1185px;top:383px;"></div>
<div class="a" style="left:0;top:405px;width:1305px;height:32px;background:#f4f4f4;"></div>
<div class="tri" style="left:13px;top:419px;"></div>
<div class="t" style="left:35px;top:415.99px;font-size:11px;line-height:13px;">None</div>
<div class="t" style="left:163px;top:415.99px;font-size:11px;line-height:13px;">None</div>
<svg class="err" style="left:294px;top:416px;" viewBox="0 0 10 10"><path d="M2 0H8L10 2V8L8 10H2L0 8V2Z" fill="url(#eg)"/><rect x="4.1" y="1.9" width="1.8" height="4.1" fill="#fff"/><rect x="4.1" y="7.2" width="1.8" height="1.1" fill="#fff"/></svg><div class="t" style="left:309px;top:414.99px;font-size:11px;line-height:13px;">None</div>
<div class="t" style="left:418.20000000000005px;top:415.31px;font-size:11.5px;line-height:14px;">Never installed</div>
<div class="t" style="left:547px;top:415.99px;font-size:11px;line-height:13px;letter-spacing:0.5px;">490000013</div>
<div class="t" style="left:674px;top:415.31px;font-size:11.5px;line-height:14px;">Outstanding Evoluti...</div>
<svg class="err" style="left:805px;top:416px;" viewBox="0 0 10 10"><path d="M2 0H8L10 2V8L8 10H2L0 8V2Z" fill="url(#eg)"/><rect x="4.1" y="1.9" width="1.8" height="4.1" fill="#fff"/><rect x="4.1" y="7.2" width="1.8" height="1.1" fill="#fff"/></svg><div class="t" style="left:820px;top:414.31px;font-size:11.5px;line-height:14px;">33</div>
<div class="cb" style="left:930px;top:414px;"><svg width="11" height="11" viewBox="0 0 11 11" style="position:absolute;left:0;top:0"><path d="M1.1 5.1L3.7 7.9L9.5 2.1" fill="none" stroke="#333" stroke-width="1.35"/></svg></div>
<div class="cbd" style="left:1058px;top:414px;"></div>
<div class="cb" style="left:1185px;top:414px;"></div>
<div class="tri" style="left:13px;top:450px;"></div>
<div class="t" style="left:35px;top:446.99px;font-size:11px;line-height:13px;">None</div>
<div class="t" style="left:163px;top:446.99px;font-size:11px;line-height:13px;">None</div>
<svg class="err" style="left:294px;top:447px;" viewBox="0 0 10 10"><path d="M2 0H8L10 2V8L8 10H2L0 8V2Z" fill="url(#eg)"/><rect x="4.1" y="1.9" width="1.8" height="4.1" fill="#fff"/><rect x="4.1" y="7.2" width="1.8" height="1.1" fill="#fff"/></svg><div class="t" style="left:309px;top:445.99px;font-size:11px;line-height:13px;">None</div>
<div class="t" style="left:418.20000000000005px;top:446.31px;font-size:11.5px;line-height:14px;">Never installed</div>
<div class="t" style="left:547px;top:446.99px;font-size:11px;line-height:13px;letter-spacing:0.5px;">490000014</div>
<div class="t" style="left:674px;top:446.31px;font-size:11.5px;line-height:14px;">Outstanding Evoluti...</div>
<svg class="err" style="left:805px;top:447px;" viewBox="0 0 10 10"><path d="M2 0H8L10 2V8L8 10H2L0 8V2Z" fill="url(#eg)"/><rect x="4.1" y="1.9" width="1.8" height="4.1" fill="#fff"/><rect x="4.1" y="7.2" width="1.8" height="1.1" fill="#fff"/></svg><div class="t" style="left:820px;top:445.31px;font-size:11.5px;line-height:14px;">23</div>
<div class="cb" style="left:930px;top:445px;"><svg width="11" height="11" viewBox="0 0 11 11" style="position:absolute;left:0;top:0"><path d="M1.1 5.1L3.7 7.9L9.5 2.1" fill="none" stroke="#333" stroke-width="1.35"/></svg></div>
<div class="cbd" style="left:1058px;top:445px;"></div>
<div class="cb" style="left:1185px;top:445px;"></div>
<div class="a" style="left:0;top:468px;width:1305px;height:31px;background:#f4f4f4;"></div>
<div class="t" style="left:35px;top:477.99px;font-size:11px;line-height:13px;">None</div>
<div class="t" style="left:163px;top:477.99px;font-size:11px;line-height:13px;">None</div>
<svg class="err" style="left:294px;top:479px;" viewBox="0 0 10 10"><path d="M2 0H8L10 2V8L8 10H2L0 8V2Z" fill="url(#eg)"/><rect x="4.1" y="1.9" width="1.8" height="4.1" fill="#fff"/><rect x="4.1" y="7.2" width="1.8" height="1.1" fill="#fff"/></svg><div class="t" style="left:309px;top:477.99px;font-size:11px;line-height:13px;">None</div>
<div class="t" style="left:418.20000000000005px;top:477.31px;font-size:11.5px;line-height:14px;">Never installed</div>
<div class="t" style="left:547px;top:477.99px;font-size:11px;line-height:13px;letter-spacing:0.5px;">490000015</div>
<div class="t" style="left:674px;top:477.31px;font-size:11.5px;line-height:14px;">Week</div>
<svg class="err" style="left:805px;top:479px;" viewBox="0 0 10 10"><path d="M2 0H8L10 2V8L8 10H2L0 8V2Z" fill="url(#eg)"/><rect x="4.1" y="1.9" width="1.8" height="4.1" fill="#fff"/><rect x="4.1" y="7.2" width="1.8" height="1.1" fill="#fff"/></svg><div class="t" style="left:820px;top:477.31px;font-size:11.5px;line-height:14px;">6</div>
<div class="cb" style="left:930px;top:477px;"><svg width="11" height="11" viewBox="0 0 11 11" style="position:absolute;left:0;top:0"><path d="M1.1 5.1L3.7 7.9L9.5 2.1" fill="none" stroke="#333" stroke-width="1.35"/></svg></div>
<div class="cbd" style="left:1058px;top:477px;"></div>
<div class="cb" style="left:1185px;top:477px;"></div>
<div class="t" style="left:35px;top:509.99px;font-size:11px;line-height:13px;">None</div>
<div class="t" style="left:163px;top:509.99px;font-size:11px;line-height:13px;">None</div>
<svg class="err" style="left:294px;top:510px;" viewBox="0 0 10 10"><path d="M2 0H8L10 2V8L8 10H2L0 8V2Z" fill="url(#eg)"/><rect x="4.1" y="1.9" width="1.8" height="4.1" fill="#fff"/><rect x="4.1" y="7.2" width="1.8" height="1.1" fill="#fff"/></svg><div class="t" style="left:309px;top:508.99px;font-size:11px;line-height:13px;">None</div>
<div class="t" style="left:418.20000000000005px;top:509.31px;font-size:11.5px;line-height:14px;">Never installed</div>
<div class="t" style="left:547px;top:509.99px;font-size:11px;line-height:13px;letter-spacing:0.5px;">490000016</div>
<div class="t" style="left:674px;top:509.31px;font-size:11.5px;line-height:14px;">File</div>
<svg class="err" style="left:805px;top:510px;" viewBox="0 0 10 10"><path d="M2 0H8L10 2V8L8 10H2L0 8V2Z" fill="url(#eg)"/><rect x="4.1" y="1.9" width="1.8" height="4.1" fill="#fff"/><rect x="4.1" y="7.2" width="1.8" height="1.1" fill="#fff"/></svg><div class="t" style="left:820px;top:508.31px;font-size:11.5px;line-height:14px;">10</div>
<div class="cb" style="left:930px;top:508px;"><svg width="11" height="11" viewBox="0 0 11 11" style="position:absolute;left:0;top:0"><path d="M1.1 5.1L3.7 7.9L9.5 2.1" fill="none" stroke="#333" stroke-width="1.35"/></svg></div>
<div class="cbd" style="left:1058px;top:508px;"></div>
<div class="cb" style="left:1185px;top:508px;"></div>
<div class="a" style="left:0;top:530px;width:1305px;height:31px;background:#f4f4f4;"></div>
<div class="t" style="left:35px;top:540.99px;font-size:11px;line-height:13px;">None</div>
<div class="t" style="left:163px;top:540.99px;font-size:11px;line-height:13px;">None</div>
<svg class="err" style="left:294px;top:541px;" viewBox="0 0 10 10"><path d="M2 0H8L10 2V8L8 10H2L0 8V2Z" fill="url(#eg)"/><rect x="4.1" y="1.9" width="1.8" height="4.1" fill="#fff"/><rect x="4.1" y="7.2" width="1.8" height="1.1" fill="#fff"/></svg><div class="t" style="left:309px;top:539.99px;font-size:11px;line-height:13px;">None</div>
<div class="t" style="left:418.20000000000005px;top:540.31px;font-size:11.5px;line-height:14px;">Never installed</div>
<div class="t" style="left:547px;top:540.99px;font-size:11px;line-height:13px;letter-spacing:0.5px;">490000017</div>
<div class="t" style="left:674px;top:540.31px;font-size:11.5px;line-height:14px;">Interest Rate</div>
<svg class="err" style="left:805px;top:541px;" viewBox="0 0 10 10"><path d="M2 0H8L10 2V8L8 10H2L0 8V2Z" fill="url(#eg)"/><rect x="4.1" y="1.9" width="1.8" height="4.1" fill="#fff"/><rect x="4.1" y="7.2" width="1.8" height="1.1" fill="#fff"/></svg><div class="t" style="left:820px;top:539.31px;font-size:11.5px;line-height:14px;">12</div>
<div class="cb" style="left:930px;top:539px;"><svg width="11" height="11" viewBox="0 0 11 11" style="position:absolute;left:0;top:0"><path d="M1.1 5.1L3.7 7.9L9.5 2.1" fill="none" stroke="#333" stroke-width="1.35"/></svg></div>
<div class="cbd" style="left:1058px;top:539px;"></div>
<div class="cb" style="left:1185px;top:539px;"></div>
<div class="t" style="left:35px;top:571.99px;font-size:11px;line-height:13px;">None</div>
<div class="t" style="left:163px;top:571.99px;font-size:11px;line-height:13px;">None</div>
<svg class="err" style="left:294px;top:572px;" viewBox="0 0 10 10"><path d="M2 0H8L10 2V8L8 10H2L0 8V2Z" fill="url(#eg)"/><rect x="4.1" y="1.9" width="1.8" height="4.1" fill="#fff"/><rect x="4.1" y="7.2" width="1.8" height="1.1" fill="#fff"/></svg><div class="t" style="left:309px;top:570.99px;font-size:11px;line-height:13px;">None</div>
<div class="t" style="left:418.20000000000005px;top:571.31px;font-size:11.5px;line-height:14px;">Never installed</div>
<div class="t" style="left:547px;top:571.99px;font-size:11px;line-height:13px;letter-spacing:0.5px;">490000018</div>
<div class="t" style="left:674px;top:571.31px;font-size:11.5px;line-height:14px;">Calculation Basis</div>
<svg class="err" style="left:805px;top:572px;" viewBox="0 0 10 10"><path d="M2 0H8L10 2V8L8 10H2L0 8V2Z" fill="url(#eg)"/><rect x="4.1" y="1.9" width="1.8" height="4.1" fill="#fff"/><rect x="4.1" y="7.2" width="1.8" height="1.1" fill="#fff"/></svg><div class="t" style="left:820px;top:570.31px;font-size:11.5px;line-height:14px;">13</div>
<div class="cb" style="left:930px;top:570px;"><svg width="11" height="11" viewBox="0 0 11 11" style="position:absolute;left:0;top:0"><path d="M1.1 5.1L3.7 7.9L9.5 2.1" fill="none" stroke="#333" stroke-width="1.35"/></svg></div>
<div class="cbd" style="left:1058px;top:570px;"></div>
<div class="cb" style="left:1185px;top:570px;"></div>
<div class="a" style="left:0;top:593px;width:1305px;height:31px;background:#f4f4f4;"></div>
<div class="t" style="left:35px;top:602.99px;font-size:11px;line-height:13px;">None</div>
<div class="t" style="left:163px;top:602.99px;font-size:11px;line-height:13px;">None</div>
<svg class="err" style="left:294px;top:603px;" viewBox="0 0 10 10"><path d="M2 0H8L10 2V8L8 10H2L0 8V2Z" fill="url(#eg)"/><rect x="4.1" y="1.9" width="1.8" height="4.1" fill="#fff"/><rect x="4.1" y="7.2" width="1.8" height="1.1" fill="#fff"/></svg><div class="t" style="left:309px;top:601.99px;font-size:11px;line-height:13px;">None</div>
<div class="t" style="left:418.20000000000005px;top:602.31px;font-size:11.5px;line-height:14px;">Never installed</div>
<div class="t" style="left:547px;top:602.99px;font-size:11px;line-height:13px;letter-spacing:0.5px;">490000019</div>
<div class="t" style="left:674px;top:602.31px;font-size:11.5px;line-height:14px;">Transaction BO Sta...</div>
<svg class="err" style="left:805px;top:603px;" viewBox="0 0 10 10"><path d="M2 0H8L10 2V8L8 10H2L0 8V2Z" fill="url(#eg)"/><rect x="4.1" y="1.9" width="1.8" height="4.1" fill="#fff"/><rect x="4.1" y="7.2" width="1.8" height="1.1" fill="#fff"/></svg><div class="t" style="left:820px;top:601.31px;font-size:11.5px;line-height:14px;">11</div>
<div class="cb" style="left:930px;top:601px;"><svg width="11" height="11" viewBox="0 0 11 11" style="position:absolute;left:0;top:0"><path d="M1.1 5.1L3.7 7.9L9.5 2.1" fill="none" stroke="#333" stroke-width="1.35"/></svg></div>
<div class="cbd" style="left:1058px;top:601px;"></div>
<div class="cb" style="left:1185px;top:601px;"></div>
<div class="t" style="left:35px;top:633.99px;font-size:11px;line-height:13px;">None</div>
<div class="t" style="left:163px;top:633.99px;font-size:11px;line-height:13px;">None</div>
<svg class="err" style="left:294px;top:635px;" viewBox="0 0 10 10"><path d="M2 0H8L10 2V8L8 10H2L0 8V2Z" fill="url(#eg)"/><rect x="4.1" y="1.9" width="1.8" height="4.1" fill="#fff"/><rect x="4.1" y="7.2" width="1.8" height="1.1" fill="#fff"/></svg><div class="t" style="left:309px;top:633.99px;font-size:11px;line-height:13px;">None</div>
<div class="t" style="left:418.20000000000005px;top:633.31px;font-size:11.5px;line-height:14px;">Never installed</div>
<div class="t" style="left:547px;top:633.99px;font-size:11px;line-height:13px;letter-spacing:0.5px;">490000020</div>
<div class="t" style="left:674px;top:633.31px;font-size:11.5px;line-height:14px;">ML Term Type</div>
<svg class="err" style="left:805px;top:635px;" viewBox="0 0 10 10"><path d="M2 0H8L10 2V8L8 10H2L0 8V2Z" fill="url(#eg)"/><rect x="4.1" y="1.9" width="1.8" height="4.1" fill="#fff"/><rect x="4.1" y="7.2" width="1.8" height="1.1" fill="#fff"/></svg><div class="t" style="left:820px;top:633.31px;font-size:11.5px;line-height:14px;">14</div>
<div class="cb" style="left:930px;top:633px;"><svg width="11" height="11" viewBox="0 0 11 11" style="position:absolute;left:0;top:0"><path d="M1.1 5.1L3.7 7.9L9.5 2.1" fill="none" stroke="#333" stroke-width="1.35"/></svg></div>
<div class="cbd" style="left:1058px;top:633px;"></div>
<div class="cb" style="left:1185px;top:633px;"></div>
<div class="a" style="left:0;top:655px;width:1305px;height:31px;background:#f4f4f4;"></div>
<div class="t" style="left:35px;top:665.99px;font-size:11px;line-height:13px;">None</div>
<div class="t" style="left:163px;top:665.99px;font-size:11px;line-height:13px;">None</div>
<svg class="err" style="left:294px;top:666px;" viewBox="0 0 10 10"><path d="M2 0H8L10 2V8L8 10H2L0 8V2Z" fill="url(#eg)"/><rect x="4.1" y="1.9" width="1.8" height="4.1" fill="#fff"/><rect x="4.1" y="7.2" width="1.8" height="1.1" fill="#fff"/></svg><div class="t" style="left:309px;top:664.99px;font-size:11px;line-height:13px;">None</div>
<div class="t" style="left:418.20000000000005px;top:665.31px;font-size:11.5px;line-height:14px;">Never installed</div>
<div class="t" style="left:547px;top:665.99px;font-size:11px;line-height:13px;letter-spacing:0.5px;">490000021</div>
<div class="t" style="left:674px;top:665.31px;font-size:11.5px;line-height:14px;">Fortnight</div>
<svg class="err" style="left:805px;top:666px;" viewBox="0 0 10 10"><path d="M2 0H8L10 2V8L8 10H2L0 8V2Z" fill="url(#eg)"/><rect x="4.1" y="1.9" width="1.8" height="4.1" fill="#fff"/><rect x="4.1" y="7.2" width="1.8" height="1.1" fill="#fff"/></svg><div class="t" style="left:820px;top:664.31px;font-size:11.5px;line-height:14px;">13</div>
<div class="cb" style="left:930px;top:664px;"><svg width="11" height="11" viewBox="0 0 11 11" style="position:absolute;left:0;top:0"><path d="M1.1 5.1L3.7 7.9L9.5 2.1" fill="none" stroke="#333" stroke-width="1.35"/></svg></div>
<div class="cbd" style="left:1058px;top:664px;"></div>
<div class="cb" style="left:1185px;top:664px;"></div>
<div class="t" style="left:35px;top:696.99px;font-size:11px;line-height:13px;">None</div>
<div class="t" style="left:163px;top:696.99px;font-size:11px;line-height:13px;">None</div>
<svg class="err" style="left:294px;top:697px;" viewBox="0 0 10 10"><path d="M2 0H8L10 2V8L8 10H2L0 8V2Z" fill="url(#eg)"/><rect x="4.1" y="1.9" width="1.8" height="4.1" fill="#fff"/><rect x="4.1" y="7.2" width="1.8" height="1.1" fill="#fff"/></svg><div class="t" style="left:309px;top:695.99px;font-size:11px;line-height:13px;">None</div>
<div class="t" style="left:418.20000000000005px;top:696.31px;font-size:11.5px;line-height:14px;">Never installed</div>
<div class="t" style="left:547px;top:696.99px;font-size:11px;line-height:13px;letter-spacing:0.5px;">490000022</div>
<div class="t" style="left:674px;top:696.31px;font-size:11.5px;line-height:14px;">Decade</div>
<svg class="err" style="left:805px;top:697px;" viewBox="0 0 10 10"><path d="M2 0H8L10 2V8L8 10H2L0 8V2Z" fill="url(#eg)"/><rect x="4.1" y="1.9" width="1.8" height="4.1" fill="#fff"/><rect x="4.1" y="7.2" width="1.8" height="1.1" fill="#fff"/></svg><div class="t" style="left:820px;top:695.31px;font-size:11.5px;line-height:14px;">10</div>
<div class="cb" style="left:930px;top:695px;"><svg width="11" height="11" viewBox="0 0 11 11" style="position:absolute;left:0;top:0"><path d="M1.1 5.1L3.7 7.9L9.5 2.1" fill="none" stroke="#333" stroke-width="1.35"/></svg></div>
<div class="cbd" style="left:1058px;top:695px;"></div>
<div class="cb" style="left:1185px;top:695px;"></div>
<div class="a" style="left:0;top:717px;width:1305px;height:32px;background:#f4f4f4;"></div>
<div class="t" style="left:35px;top:727.99px;font-size:11px;line-height:13px;">None</div>
<div class="t" style="left:163px;top:727.99px;font-size:11px;line-height:13px;">None</div>
<svg class="err" style="left:294px;top:728px;" viewBox="0 0 10 10"><path d="M2 0H8L10 2V8L8 10H2L0 8V2Z" fill="url(#eg)"/><rect x="4.1" y="1.9" width="1.8" height="4.1" fill="#fff"/><rect x="4.1" y="7.2" width="1.8" height="1.1" fill="#fff"/></svg><div class="t" style="left:309px;top:726.99px;font-size:11px;line-height:13px;">None</div>
<div class="t" style="left:418.20000000000005px;top:727.31px;font-size:11.5px;line-height:14px;">Never installed</div>
<div class="t" style="left:547px;top:727.99px;font-size:11px;line-height:13px;letter-spacing:0.5px;">490000023</div>
<div class="t" style="left:674px;top:727.31px;font-size:11.5px;line-height:14px;">Account Code</div>
<svg class="err" style="left:805px;top:728px;" viewBox="0 0 10 10"><path d="M2 0H8L10 2V8L8 10H2L0 8V2Z" fill="url(#eg)"/><rect x="4.1" y="1.9" width="1.8" height="4.1" fill="#fff"/><rect x="4.1" y="7.2" width="1.8" height="1.1" fill="#fff"/></svg><div class="t" style="left:820px;top:726.31px;font-size:11.5px;line-height:14px;">9</div>
<div class="cb" style="left:930px;top:726px;"><svg width="11" height="11" viewBox="0 0 11 11" style="position:absolute;left:0;top:0"><path d="M1.1 5.1L3.7 7.9L9.5 2.1" fill="none" stroke="#333" stroke-width="1.35"/></svg></div>
<div class="cbd" style="left:1058px;top:726px;"></div>
<div class="cb" style="left:1185px;top:726px;"></div>
<div class="t" style="left:35px;top:758.99px;font-size:11px;line-height:13px;">None</div>
<div class="t" style="left:163px;top:758.99px;font-size:11px;line-height:13px;">None</div>
<svg class="err" style="left:294px;top:759px;" viewBox="0 0 10 10"><path d="M2 0H8L10 2V8L8 10H2L0 8V2Z" fill="url(#eg)"/><rect x="4.1" y="1.9" width="1.8" height="4.1" fill="#fff"/><rect x="4.1" y="7.2" width="1.8" height="1.1" fill="#fff"/></svg><div class="t" style="left:309px;top:757.99px;font-size:11px;line-height:13px;">None</div>
<div class="t" style="left:418.20000000000005px;top:758.31px;font-size:11.5px;line-height:14px;">Never installed</div>
<div class="t" style="left:547px;top:758.99px;font-size:11px;line-height:13px;letter-spacing:0.5px;">490000024</div>
<div class="t" style="left:674px;top:758.31px;font-size:11.5px;line-height:14px;">Account Type</div>
<svg class="err" style="left:805px;top:759px;" viewBox="0 0 10 10"><path d="M2 0H8L10 2V8L8 10H2L0 8V2Z" fill="url(#eg)"/><rect x="4.1" y="1.9" width="1.8" height="4.1" fill="#fff"/><rect x="4.1" y="7.2" width="1.8" height="1.1" fill="#fff"/></svg><div class="t" style="left:820px;top:757.31px;font-size:11.5px;line-height:14px;">14</div>
<div class="cb" style="left:930px;top:757px;"><svg width="11" height="11" viewBox="0 0 11 11" style="position:absolute;left:0;top:0"><path d="M1.1 5.1L3.7 7.9L9.5 2.1" fill="none" stroke="#333" stroke-width="1.35"/></svg></div>
<div class="cbd" style="left:1058px;top:757px;"></div>
<div class="cb" style="left:1185px;top:757px;"></div>
<div class="vl" style="left:155px;top:0;height:764px;"></div>
<div class="vl" style="left:283px;top:0;height:764px;"></div>
<div class="vl" style="left:410px;top:0;height:764px;"></div>
<div class="vl" style="left:538px;top:0;height:764px;"></div>
<div class="vl" style="left:666px;top:0;height:764px;"></div>
<div class="vl" style="left:794px;top:0;height:764px;"></div>
<div class="vl" style="left:922px;top:0;height:764px;"></div>
<div class="vl" style="left:1049px;top:0;height:764px;"></div>
<div class="vl" style="left:1177px;top:0;height:764px;"></div>
</div>
<div class="a" style="left:1590px;top:104px;width:16px;height:765px;background:#f0f0f0;"></div>
<div class="a" style="left:1590px;top:122px;width:15px;height:239px;background:#cdcdcd;"></div>
<svg class="a" style="left:1593px;top:110px;" width="10" height="9" viewBox="0 0 10 9"><path d="M1.2 6.8L4.4 2.6L7.7 6.8" fill="none" stroke="#474747" stroke-width="2"/></svg>
<svg class="a" style="left:1593px;top:857px;" width="10" height="9" viewBox="0 0 10 9"><path d="M1.2 1.1L4.4 5.3L7.7 1.1" fill="none" stroke="#474747" stroke-width="2"/></svg>
<div class="btn" style="left:280px;top:878px;width:42px;height:26px;"></div>
<div class="t" style="left:289px;top:885.69px;font-size:11px;line-height:13px;">Back</div>
<div class="btn" style="left:1280px;top:878px;width:40px;height:26px;"></div>
<div class="t" style="left:1288px;top:885.69px;font-size:11px;line-height:13px;">Next</div>
<svg width="0" height="0" style="position:absolute;left:0;top:0"><defs><linearGradient id="eg" x1="0" y1="0" x2="0" y2="1"><stop offset="0" stop-color="#f41f22"/><stop offset="1" stop-color="#d22a2e"/></linearGradient></defs></svg>
</body></html>
